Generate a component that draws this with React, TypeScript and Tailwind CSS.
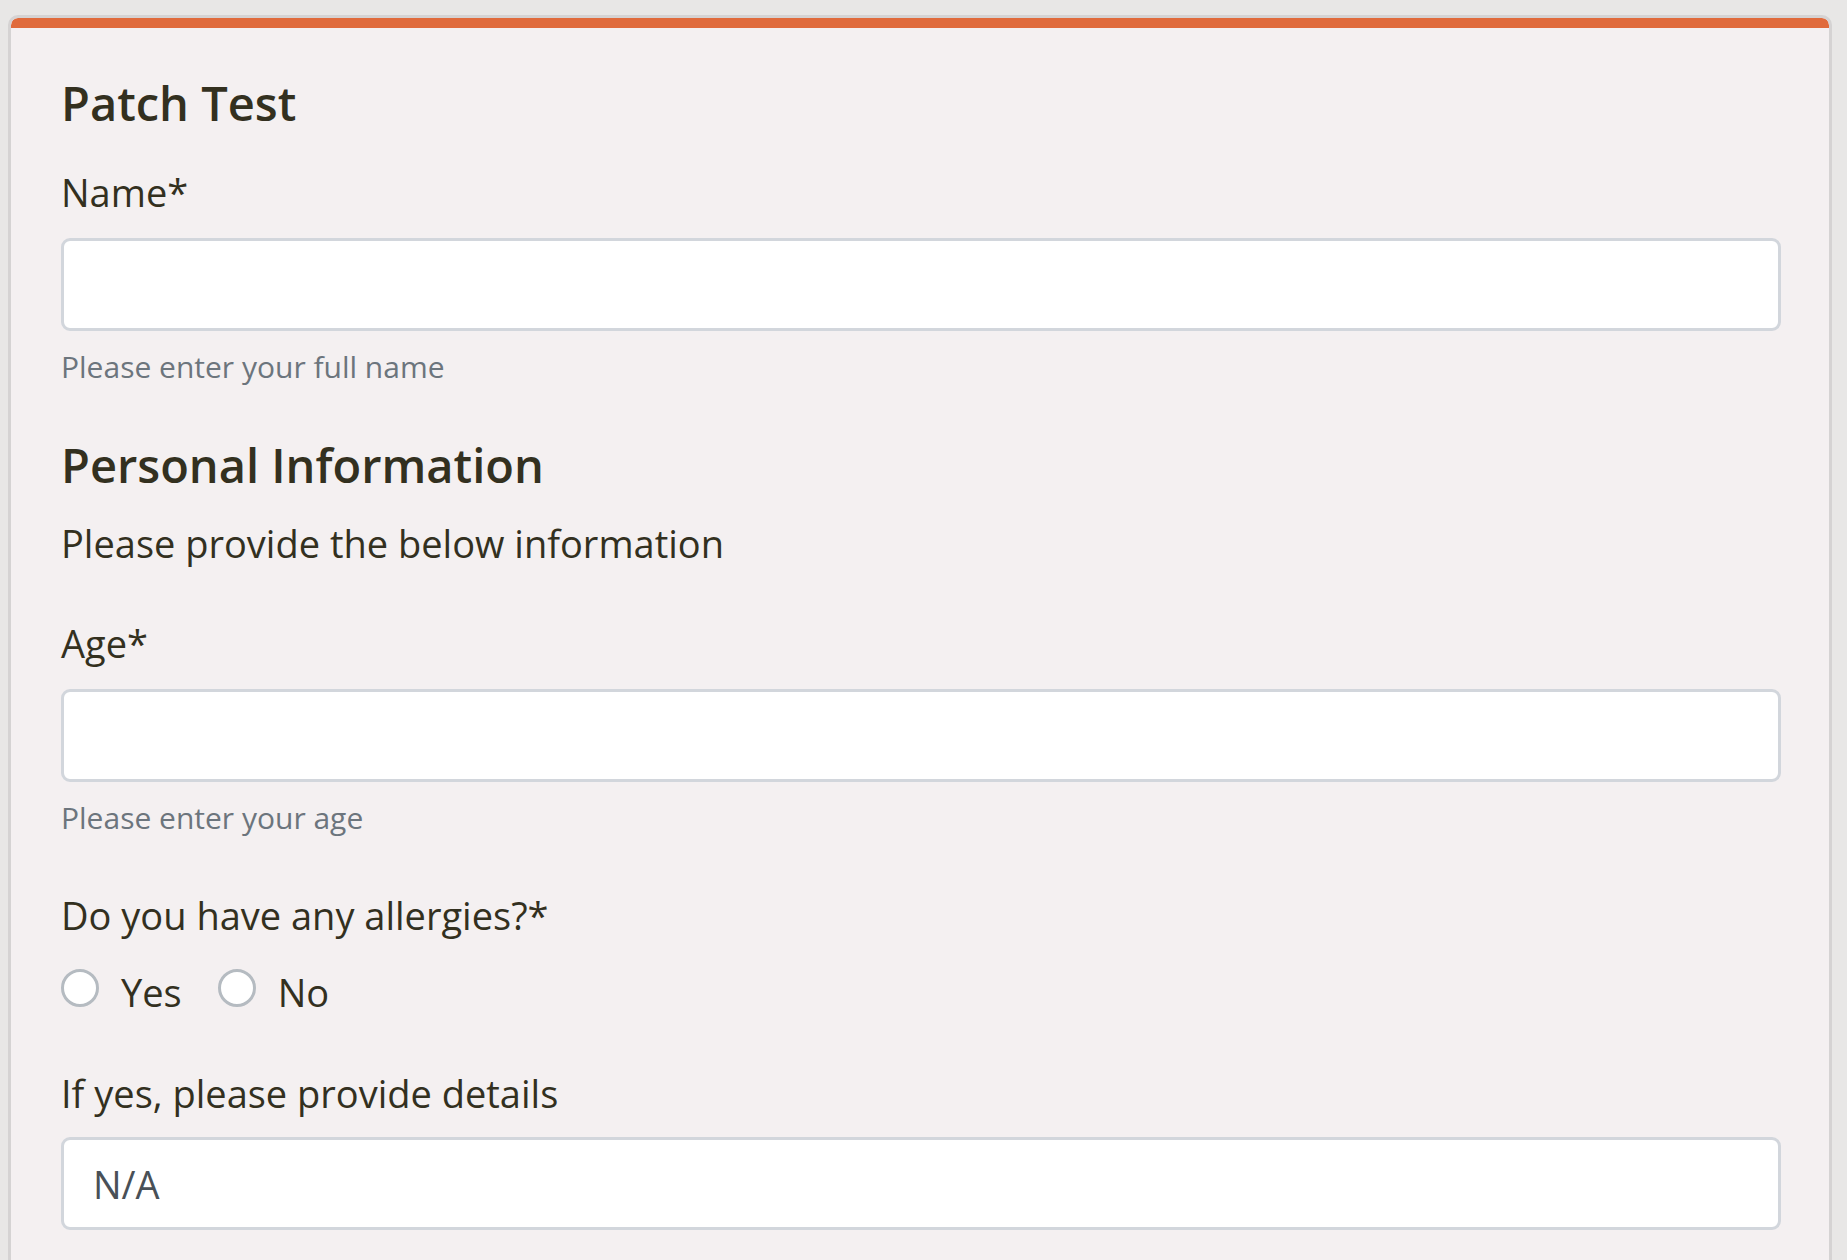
import React from "react";

const font = { fontFamily: '"Open Sans", "Noto Sans", sans-serif' };

function Radio({ label }: { label: string }) {
  return (
    <label className="flex items-start">
      <span className="mt-[-1px] h-[38px] w-[38px] shrink-0 rounded-full border-[3px] border-[#b5bbc1] bg-white" />
      <span className="ml-[22px] text-[38px] leading-[44px] text-[#33301f]">{label}</span>
    </label>
  );
}

function TextInput({ value = "" }: { value?: string }) {
  return (
    <input
      readOnly
      value={value}
      className="block h-[93px] w-full rounded-[9px] border-[3px] border-[#d2d6dc] bg-white px-[29px] text-[38px] text-[#495057] outline-none"
      style={font}
    />
  );
}

export default function App() {
  return (
    <div className="h-[1260px] overflow-hidden bg-[#e8e7e6] pl-[8px] pr-[15px] pt-[15px]" style={font}>
      <div className="h-[1400px] overflow-hidden rounded-[10px] border-[3px] border-[#d5d3d3] bg-[#f4f0f1]">
        <div className="h-[10px] rounded-t-[7px] bg-[#e06b3c]" />
        <div className="pl-[50px] pr-[48px] pt-[47px]">
          <h1 className="text-[47px] font-semibold leading-[56px] text-[#33301f]">Patch Test</h1>

          <div className="mt-[39px] text-[38px] leading-[44px] text-[#33301f]">Name*</div>
          <div className="mt-[24px]">
            <TextInput />
          </div>
          <div className="mt-[18px] text-[30px] leading-[36px] text-[#6c757d]">Please enter your full name</div>

          <h2 className="mt-[52px] text-[47px] font-semibold leading-[56px] text-[#33301f]">Personal Information</h2>
          <p className="mt-[28px] text-[38px] leading-[44px] text-[#33301f]">Please provide the below information</p>

          <div className="mt-[56px] text-[38px] leading-[44px] text-[#33301f]">Age*</div>
          <div className="mt-[24px]">
            <TextInput />
          </div>
          <div className="mt-[18px] text-[30px] leading-[36px] text-[#6c757d]">Please enter your age</div>

          <div className="mt-[57px] text-[38px] leading-[44px] text-[#33301f]">Do you have any allergies?*</div>
          <div className="mt-[33px] flex gap-[36px]">
            <Radio label="Yes" />
            <Radio label="No" />
          </div>

          <div className="mt-[57px] text-[38px] leading-[44px] text-[#33301f]">If yes, please provide details</div>
          <div className="mt-[22px]">
            <TextInput value="N/A" />
          </div>
        </div>
      </div>
    </div>
  );
}
